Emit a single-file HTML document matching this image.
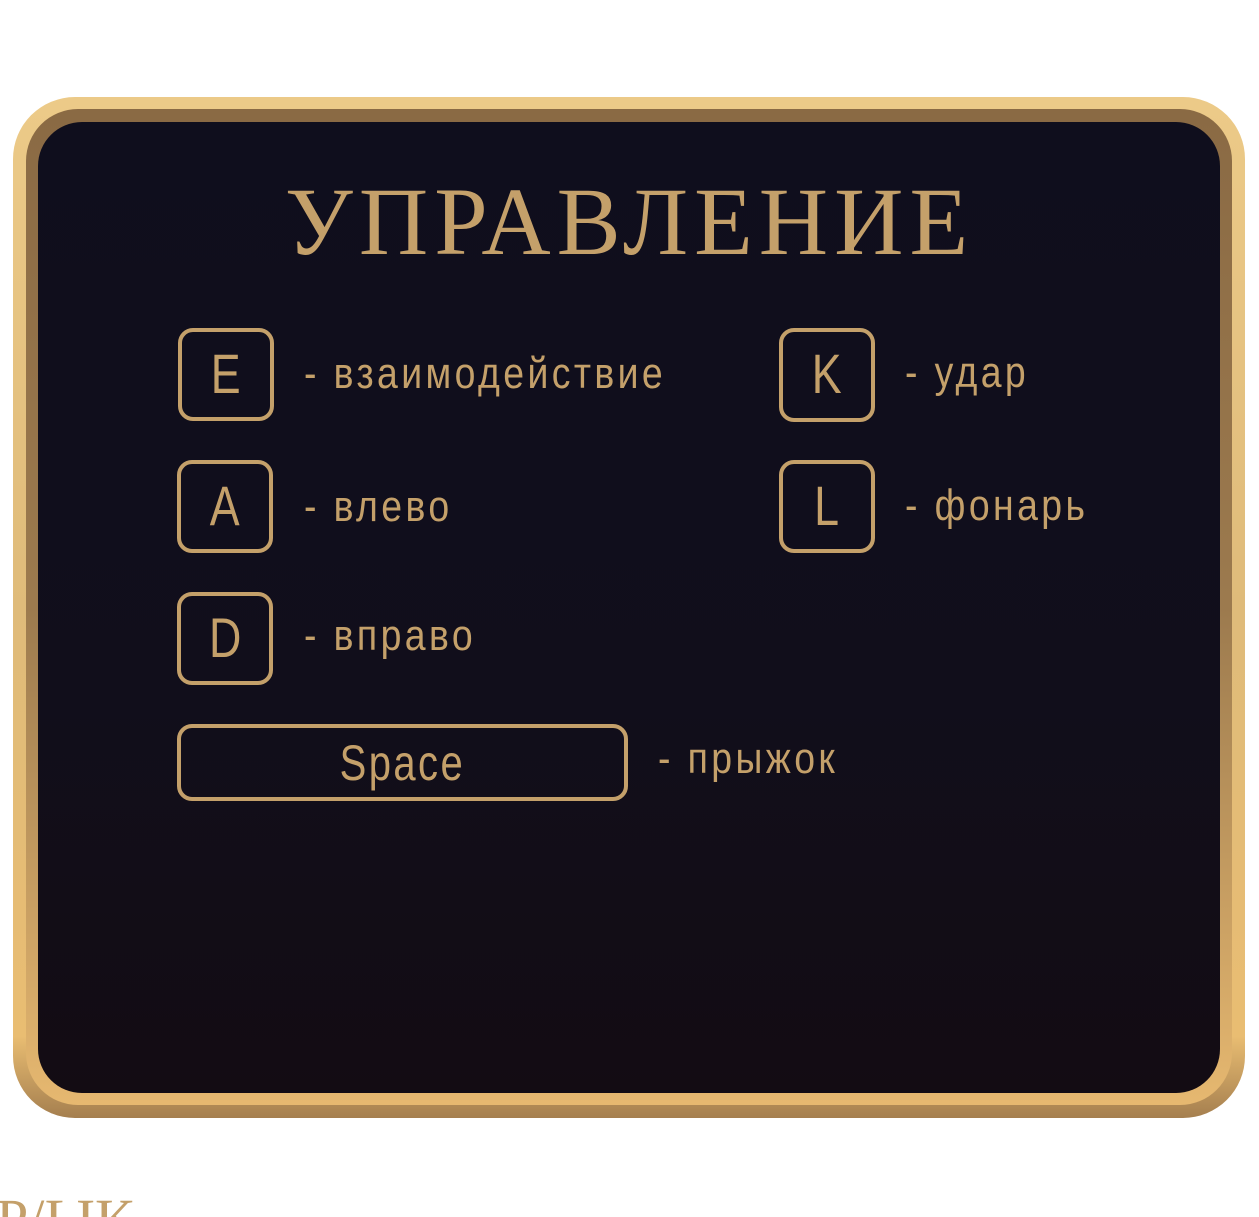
<!DOCTYPE html>
<html><head><meta charset="utf-8"><style>
html,body{margin:0;padding:0;background:#fff;width:1259px;height:1217px;overflow:hidden;position:relative}
.frame{position:absolute;left:13px;top:97px;width:1232px;height:1021px;border-radius:62px;
background:linear-gradient(180deg,#ecca88 0%,#dfbb7a 50%,#e9bd72 92%,#a57f4f 100%);}
.ring{position:absolute;left:13px;top:12px;width:1206px;height:996px;border-radius:52px;
background:linear-gradient(180deg,#8a6a44 0%,#9c7a4e 50%,#e6b870 100%);}
.inner{position:absolute;left:25px;top:25px;width:1182px;height:971px;border-radius:44px;
background:linear-gradient(180deg,#0f0e1d 0%,#110e1b 60%,#130c13 100%);}
.gold{color:#c4a06a}
.title{position:absolute;left:0;top:162px;width:1259px;text-align:center;font-family:"Liberation Serif",serif;font-size:96px;letter-spacing:6px;line-height:120px}
.key{position:absolute;border:4px solid #c4a06a;border-radius:15px;box-sizing:border-box;color:#c4a06a;font-family:"Liberation Sans",sans-serif;font-size:56px;text-align:center;line-height:84px}
.key span{display:inline-block;transform:scaleX(0.8)}
.lbl{position:absolute;color:#c4a06a;font-family:"Liberation Sans",sans-serif;font-size:44px;letter-spacing:4px;line-height:50px;transform:scaleX(0.85);transform-origin:left center;white-space:nowrap}
.bot{position:absolute;left:-4px;top:1186px;font-family:"Liberation Serif",serif;font-size:58px;color:#c4a06a;letter-spacing:0px}
</style></head><body>
<div class="frame"><div class="ring"></div><div class="inner"></div></div>
<div class="title gold">УПРАВЛЕНИЕ</div>
<div class="key" style="left:178px;top:328px;width:96px;height:93px"><span>E</span></div>
<div class="lbl" style="left:304px;top:349px">- взаимодействие</div>
<div class="key" style="left:177px;top:460px;width:96px;height:93px"><span>A</span></div>
<div class="lbl" style="left:304px;top:482px">- влево</div>
<div class="key" style="left:177px;top:592px;width:96px;height:93px"><span>D</span></div>
<div class="lbl" style="left:304px;top:611px">- вправо</div>
<div class="key" style="left:177px;top:724px;width:451px;height:77px;line-height:70px;font-size:50px;letter-spacing:3px"><span>Space</span></div>
<div class="lbl" style="left:658px;top:734px">- прыжок</div>
<div class="key" style="left:779px;top:328px;width:96px;height:94px"><span>K</span></div>
<div class="lbl" style="left:905px;top:348px">- удар</div>
<div class="key" style="left:779px;top:460px;width:96px;height:93px"><span>L</span></div>
<div class="lbl" style="left:905px;top:481px">- фонарь</div>
<div class="bot">Р/ЫК</div>
</body></html>
